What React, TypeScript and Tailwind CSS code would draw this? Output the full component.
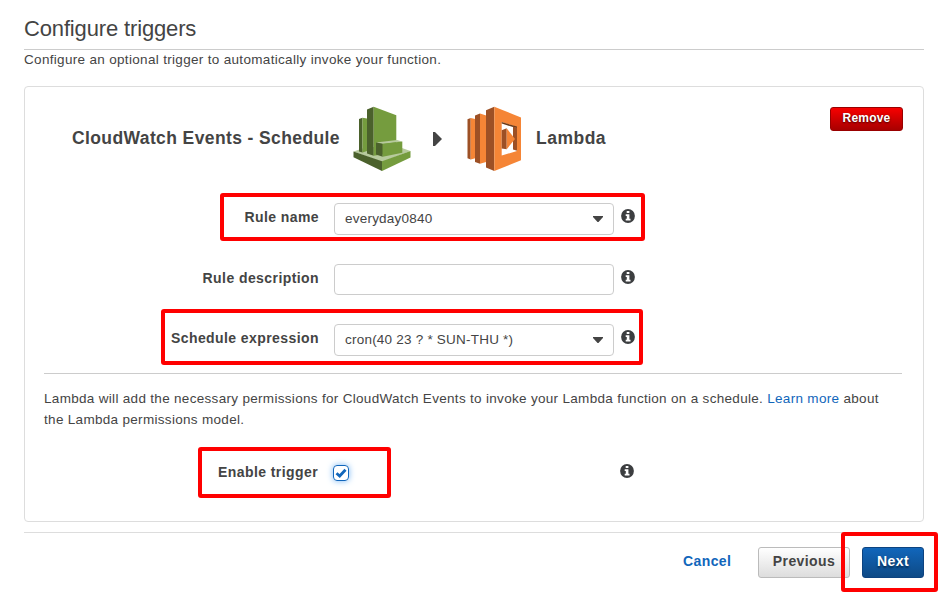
import React from 'react';

function InfoIcon() {
  return (
    <svg className="block h-[14px] w-[14px] shrink-0" viewBox="0 0 14 14">
      <circle cx="7" cy="7" r="6.9" fill="#3c3e40" />
      <path d="M5.7 2.100h2.700v2H5.700zM4.700 5.200h3.700v4.600h1.100v1.700H4.700V9.800h1.100V6.900H4.700z" fill="#fff" />
    </svg>
  );
}

function CloudWatchIcon() {
  return (
    <svg className="block h-[66px] w-[58px] shrink-0" viewBox="0 0 58 66">
      <path d="M.5 45.500L14 41h32l11.500 4L29 56z" fill="#b7ca9d" />
      <path d="M6 13l3.500-1.300v34.800L6 45.500z" fill="#4b612c" />
      <path d="M9.500 11.700L14 12.500v32.500l-4.500 1.500z" fill="#759c3e" />
      <path d="M14 3.500l6.700-2.800v49L14 47.500z" fill="#4b612c" />
      <path d="M20.700.7l22.600 8.600v37L20.700 49.700z" fill="#759c3e" />
      <path d="M23 36.500l21-2.500 5.300 1.500-19.600 2.500z" fill="#b7ca9d" />
      <path d="M23 36.500l6.700 1.300v13L23 48.500z" fill="#4b612c" />
      <path d="M29.700 37.800l19.600-2.300v11.200l-19.600 4.100z" fill="#759c3e" />
      <path d="M.5 45.500L29 55.300v9.600L.5 51.200z" fill="#4b612c" />
      <path d="M57.500 45L29 55.300v9.600l28.500-13.400z" fill="#759c3e" />
    </svg>
  );
}

function LambdaIcon() {
  return (
    <svg className="block h-[66px] w-[56px] shrink-0" viewBox="0 0 56 66">
      <path d="M1.500 13.300l3.200-1.300v41.500l-3.200-1.200z" fill="#9d5025" />
      <path d="M4.700 12l4.500 1v39.200l-4.500 1.300z" fill="#f58536" />
      <path d="M9 9.600l5-2v50.200l-5-1.900z" fill="#9d5025" />
      <path d="M14 7.600l6.200 1.800v46.500L14 57.800z" fill="#f58536" />
      <path d="M20 4.200L28.300.7V65L20 61.500z" fill="#9d5025" />
      <path d="M28.300.7L55 11.500v42.700L28.300 65z" fill="#f58536" />
      <path d="M35.700 16L51 21v24l-15.300 4.500z" fill="#fff" />
      <path d="M35.700 16L51 20.600v1.700l-15.300-4.700z" fill="#6b3a19" />
      <path d="M47 20.500l4 1v23.300l-4-1.300z" fill="#9d5025" />
      <path d="M35.700 24.200l5-2v21l-5-.8z" fill="#9d5025" />
      <path d="M40.700 22.200L49 33l-8.300 10.200z" fill="#f58536" />
    </svg>
  );
}

function Label({ children }: { children: React.ReactNode }) {
  return (
    <div className="h-5 w-[275px] text-right text-[14px] font-bold leading-5 tracking-[0.42px]">
      {children}
    </div>
  );
}

function Field({ value, select }: { value?: string; select?: boolean }) {
  return (
    <div
      className={`ml-[15px] mr-[7px] flex w-[280px] items-center justify-between rounded-[4px] border border-[#ccc] pl-[10px] pr-[10px] text-[13.5px] tracking-[0.22px] ${select ? 'h-8' : 'h-[31px]'}`}
    >
      <span className="pb-px leading-5">{value}</span>
      {select && (
        <svg className="block h-[6px] w-[10px]" viewBox="0 0 10 6">
          <path d="M0 0h10v1L5.500 6h-1L0 1z" fill="#444" />
        </svg>
      )}
    </div>
  );
}

export default function App() {
  return (
    <div className="relative h-[597px] w-[946px] overflow-hidden bg-white pl-6 pr-[22px] font-['Liberation_Sans',Arial,sans-serif] text-[#444]">
      <h1 className="h-[50px] border-b border-[#ccc] pt-[14px] text-[22px] leading-[29px] tracking-[-0.15px]">Configure triggers</h1>
      <p className="h-9 text-[13.5px] leading-[19px] tracking-[0.32px]">
        Configure an optional trigger to automatically invoke your function.
      </p>

      <section className="h-[436px] rounded-[4px] border border-[#ddd] px-[19px]">
        <div className="flex h-[106px] pt-[19px]">
          <div className="ml-7 w-[281px] whitespace-nowrap pt-[20px] text-[17.5px] font-bold leading-6 tracking-[0.39px]">CloudWatch Events - Schedule</div>
          <CloudWatchIcon />
          <svg className="ml-[22px] mt-[25px] block h-4 w-[9px]" viewBox="0 0 9 16">
            <path d="M0 1h2l7 7-7 7H0z" fill="#444" />
          </svg>
          <div className="ml-[24px]"><LambdaIcon /></div>
          <div className="ml-[14px] pt-[20px] text-[17.5px] font-bold leading-6 tracking-[0.5px]">Lambda</div>
          <button className="ml-auto mr-px mt-[1px] h-6 w-[73px] rounded-[3px] border border-[#900] bg-gradient-to-b from-[#f80000] to-[#a80000] pb-[2px] text-[12px] font-bold leading-5 tracking-[0.2px] text-white [text-shadow:0_1px_2px_#400]">
            Remove
          </button>
        </div>
        <div className="flex h-[60px] pt-[10px]">
          <div className="pt-[4px]"><Label>Rule name</Label></div>
          <Field select value="everyday0840" />
          <div className="pt-[6px]"><InfoIcon /></div>
        </div>
        <div className="flex h-[60px] pt-[11px]">
          <div className="pt-[4px]"><Label>Rule description</Label></div>
          <Field />
          <div className="pt-[6px]"><InfoIcon /></div>
        </div>
        <div className="flex h-[60px] pt-[11px]">
          <div className="pt-[4px]"><Label>Schedule expression</Label></div>
          <Field select value="cron(40 23 ? * SUN-THU *)" />
          <div className="pt-[6px]"><InfoIcon /></div>
        </div>
        <p className="h-[76px] w-[858px] border-t border-[#ccc] pt-[14px] text-[13.5px] leading-[21px] tracking-[0.31px]">
          Lambda will add the necessary permissions for CloudWatch Events to invoke your Lambda function on a schedule.{' '}
          <a className="text-[#1166bb]">Learn more</a> about<br />the Lambda permissions model.
        </p>
        <div className="flex pt-[13px]">
          <div className="-ml-px"><Label>Enable trigger</Label></div>
          <div className="ml-[15px] mt-[3px] h-4 w-4 rounded-[4px] border border-[#1166bb] shadow-[0_0_6px_#7ab8f5]">
            <svg className="block h-[14px] w-[14px]" viewBox="0 0 14 14">
              <path d="M2.500 7.200l3.200 2.800 5.800-6.300" fill="none" stroke="#1166bb" strokeWidth="2.800" />
            </svg>
          </div>
          <div className="ml-[271px] mt-[2px]"><InfoIcon /></div>
        </div>
      </section>

      <footer className="mt-[10px] flex border-t border-[#ddd] pt-[14px] text-[14px] font-bold leading-[26px] tracking-[0.4px]">
        <a className="ml-[659px] w-[75px] pt-px text-[#1166bb]">Cancel</a>
        <button className="h-[31px] w-[92px] rounded-[3px] border border-[#bbb] bg-gradient-to-b from-white to-[#ddd] pb-[3px]">Previous</button>
        <button className="ml-3 h-[31px] w-[62px] rounded-[3px] border border-[#0d4380] bg-gradient-to-b from-[#1166bb] to-[#0e4a86] pb-[3px] text-white [text-shadow:0_2px_2px_#062c52]">Next</button>
      </footer>

      <div className="absolute left-[220px] top-[193px] h-[48px] w-[425px] rounded-[3px] border-4 border-[#f00]" />
      <div className="absolute left-[161px] top-[309px] h-[56px] w-[482px] rounded-[3px] border-4 border-[#f00]" />
      <div className="absolute left-[198px] top-[447px] h-[51px] w-[193px] rounded-[3px] border-4 border-[#f00]" />
      <div className="absolute left-[841px] top-[532px] h-[60px] w-[97px] rounded-[3px] border-4 border-[#f00]" />
    </div>
  );
}
